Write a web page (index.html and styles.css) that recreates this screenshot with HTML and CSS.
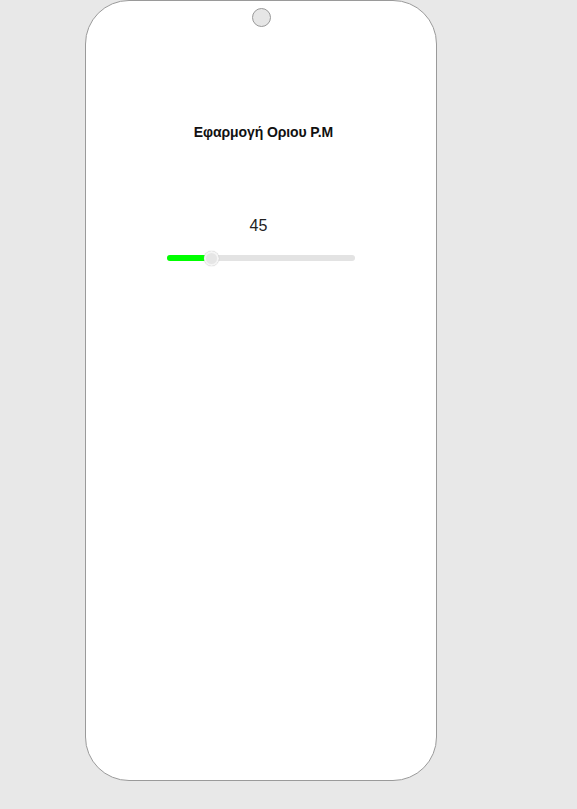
FILE: index.html
```html
<!DOCTYPE html>
<html lang="el">
<head>
<meta charset="utf-8">
<title>Εφαρμογή Οριου Ρ.Μ</title>
<link rel="stylesheet" href="styles.css">
</head>
<body>
<div class="phone">
  <div class="camera"></div>
  <h1 class="title">Εφαρμογή Οριου Ρ.Μ</h1>
  <div class="value">45</div>
  <div class="slider">
    <div class="fill" style="width: 23.5%"></div>
    <div class="thumb" style="left: 23.5%"></div>
  </div>
</div>
</body>
</html>
```
FILE: styles.css
```css
html, body {
  margin: 0;
  padding: 0;
  background: #e8e8e8;
}
body {
  font-family: "Liberation Sans", Arial, sans-serif;
  width: 577px;
  height: 809px;
  overflow: hidden;
}
.phone {
  box-sizing: border-box;
  margin-left: 85px;
  width: 352px;
  height: 781px;
  background: #fff;
  border: 1px solid #9a9a9a;
  border-radius: 44px;
  display: flex;
  flex-direction: column;
  align-items: center;
}
.camera {
  box-sizing: border-box;
  width: 19px;
  height: 19px;
  margin-top: 7px;
  border-radius: 50%;
  background: #e6e6e6;
  border: 1px solid #999;
}
.title {
  margin: 96px 0 0 5px;
  font-size: 14px;
  font-weight: bold;
  line-height: 18px;
  color: #111;
  letter-spacing: -0.1px;
}
.value {
  margin-top: 76px;
  margin-left: -5px;
  font-size: 16px;
  line-height: 18px;
  color: #222;
}
.slider {
  position: relative;
  margin-top: 20px;
  width: 188px;
  height: 6px;
  border-radius: 3px;
  background: #e3e3e3;
}
.fill {
  height: 100%;
  border-radius: 3px;
  background: #00ff00;
}
.thumb {
  position: absolute;
  top: 50%;
  width: 15px;
  height: 15px;
  margin-left: -7px;
  margin-top: -7.5px;
  border-radius: 50%;
  box-sizing: border-box;
  background: #e6e6e6;
  border: 2px solid #f5f5f5;
  box-shadow: 0 0 1px #aaa;
}
```
